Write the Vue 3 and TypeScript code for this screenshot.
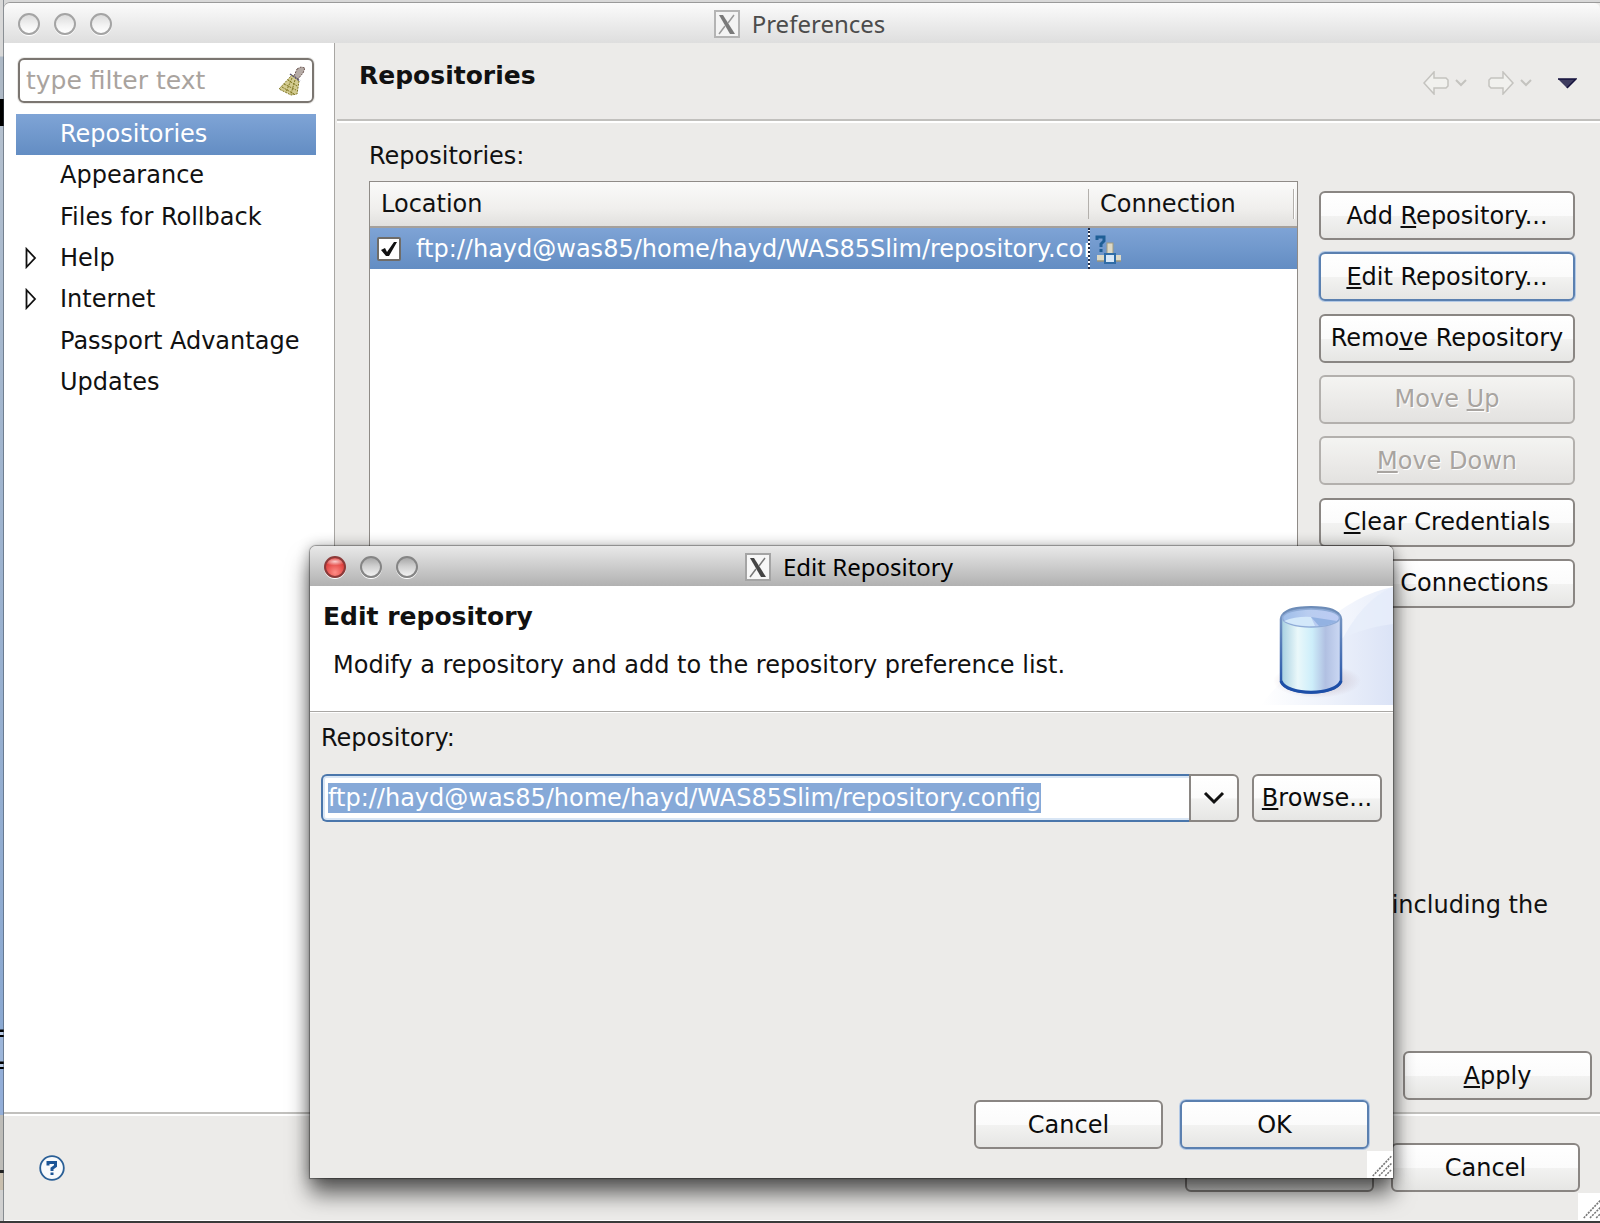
<script setup lang="ts">
import { nextTick, onMounted, ref } from 'vue'

interface TreeItem {
  label: string
  expandable?: boolean
  selected?: boolean
}

interface ActionButton {
  before: string
  key: string
  after: string
  disabled?: boolean
  focused?: boolean
}

const categories: TreeItem[] = [
  { label: 'Repositories', selected: true },
  { label: 'Appearance' },
  { label: 'Files for Rollback' },
  { label: 'Help', expandable: true },
  { label: 'Internet', expandable: true },
  { label: 'Passport Advantage' },
  { label: 'Updates' },
]

const actions: ActionButton[] = [
  { before: 'Add ', key: 'R', after: 'epository...' },
  { before: '', key: 'E', after: 'dit Repository...', focused: true },
  { before: 'Remo', key: 'v', after: 'e Repository' },
  { before: 'Move ', key: 'U', after: 'p', disabled: true },
  { before: '', key: 'M', after: 'ove Down', disabled: true },
  { before: '', key: 'C', after: 'lear Credentials' },
  { before: '', key: 'T', after: 'est Connections' },
]

const filter = ref('')
const enabled = ref(true)
const location = ref('ftp://hayd@was85/home/hayd/WAS85Slim/repository.config')
const locationField = ref<HTMLInputElement | null>(null)

onMounted(async () => {
  await nextTick()
  locationField.value?.focus({ preventScroll: true })
  locationField.value?.select()
})
</script>

<template>
  <div class="desktop">
    <main class="window">
      <header class="titlebar">
        <div class="lights">
          <button class="light" type="button" aria-label="Close"></button>
          <button class="light" type="button" aria-label="Minimize"></button>
          <button class="light" type="button" aria-label="Zoom"></button>
        </div>
        <div class="caption">
          <svg class="x11" viewBox="0 0 26 28" aria-hidden="true">
            <rect x="1" y="1" width="24" height="26" fill="#f4f4f4" stroke="#b4b4b4" stroke-width="2" />
            <path d="M5 5H9L21 24H16Z" fill="#7a7a7a" />
            <path d="M20 5L14 13M11 16L5 24" stroke="#999" stroke-width="1.500" />
          </svg>
          <span>Preferences</span>
        </div>
      </header>

      <div class="body">
        <aside class="sidebar">
          <div class="filter">
            <input v-model="filter" type="text" placeholder="type filter text" aria-label="type filter text" />
            <button class="broom" type="button" aria-label="Clear">
              <svg viewBox="0 0 26 30" aria-hidden="true">
                <path d="M18 3L22 1L26 2L24 7L19 13L15 10Z" fill="#b5aba6" stroke="#6b5550" stroke-dasharray="2 1" />
                <path d="M13 9L20 15L18 28L12 29L0 23Z" fill="#d3cb90" />
                <path d="M13 9L20 15L18 28L12 29L0 23ZM9 14L18 20M5 18L17 24M3 21L15 28M13 12L7 26M16 14L12 28" fill="none" stroke="#7d741f" stroke-dasharray="2 1" />
                <path d="M11 8L21 15" stroke="#5b5677" stroke-width="1.500" stroke-dasharray="2 1" />
              </svg>
            </button>
          </div>
          <ul class="tree" role="tree">
            <li v-for="item in categories" :key="item.label" role="treeitem" :aria-selected="!!item.selected" :class="{ selected: item.selected }">
              <span class="twist">
                <svg v-if="item.expandable" viewBox="0 0 12 22" aria-hidden="true">
                  <path d="M1.500 2V20L10 11Z" fill="#fff" stroke="#111" stroke-width="1.800" />
                </svg>
              </span>
              <span>{{ item.label }}</span>
            </li>
          </ul>
        </aside>

        <section class="page">
          <div class="page-head">
            <h1>Repositories</h1>
            <nav class="history">
              <button type="button" disabled aria-label="Back">
                <svg width="46" height="24" viewBox="0 0 46 24" fill="none" stroke="#c4c3bf" stroke-width="1.500">
                  <path d="M1 12L11 1V7H23L25 9V15L23 17H11V23Z" fill="#f1f1ee" />
                  <path d="M33 9L38 14L43 9" stroke-width="2" />
                </svg>
              </button>
              <button type="button" disabled aria-label="Forward">
                <svg width="46" height="24" viewBox="0 0 46 24" fill="none" stroke="#c4c3bf" stroke-width="1.500">
                  <path d="M25 12L15 1V7H3L1 9V15L3 17H15V23Z" fill="#f1f1ee" />
                  <path d="M33 9L38 14L43 9" stroke-width="2" />
                </svg>
              </button>
              <button type="button" aria-label="Menu">
                <svg width="20" height="24" viewBox="0 0 20 24">
                  <path d="M1 8H19L10 17Z" fill="#3f3d60" />
                  <path d="M1 8H19L10 17" fill="none" stroke="#15123c" stroke-width="1.500" />
                </svg>
              </button>
            </nav>
          </div>

          <div class="page-body">
            <p class="field-label">Repositories:</p>
            <div class="columns">
              <div class="list">
                <table>
                  <colgroup>
                    <col />
                    <col class="col-connection" />
                  </colgroup>
                  <thead>
                    <tr>
                      <th scope="col"><span>Location</span></th>
                      <th scope="col"><span>Connection</span></th>
                    </tr>
                  </thead>
                  <tbody>
                    <tr>
                      <td>
                        <label class="entry">
                          <span class="tick">
                            <input v-model="enabled" type="checkbox" />
                            <svg v-if="enabled" viewBox="0 0 24 24" aria-hidden="true">
                              <path d="M4 13L8 11L10 15L17 5L20 5L12 19H9Z" fill="#111" />
                            </svg>
                          </span>
                          <span>{{ location }}</span>
                        </label>
                      </td>
                      <td class="state">
                        <svg width="28" height="30" viewBox="0 0 28 30" aria-label="Unknown connection">
                          <path d="M3 6V3H10V7L7 10V13M7 15V18" fill="none" stroke="#1f5f96" stroke-width="3" />
                          <rect x="13" y="9" width="6" height="11" fill="#dcd9c6" stroke="#a09c82" />
                          <rect x="3" y="21" width="24" height="6" fill="#dcd9c6" />
                          <path d="M3 27H27" stroke="#97947e" stroke-width="1.500" />
                          <rect x="11" y="20" width="10" height="9" fill="#d7e8f8" stroke="#2f6ca6" stroke-width="2" />
                        </svg>
                      </td>
                    </tr>
                  </tbody>
                </table>
              </div>

              <div class="actions">
                <button v-for="a in actions" :key="a.key + a.after" type="button" class="btn" :class="{ focused: a.focused }" :disabled="a.disabled">
                  {{ a.before }}<u>{{ a.key }}</u>{{ a.after }}
                </button>
              </div>
            </div>
            <p class="note">including the</p>
            <div class="apply-row">
              <button type="button" class="btn wide"><u>A</u>pply</button>
            </div>
          </div>
        </section>
      </div>

      <footer class="footer">
        <button class="help" type="button" aria-label="Help">
          <svg width="26" height="26" viewBox="0 0 26 26" aria-hidden="true">
            <circle cx="13" cy="13" r="11.800" fill="#f8fafc" stroke="#2a5f96" stroke-width="1.800" />
            <path d="M9 10.500V7.500H16.500V11L13 13.500V16M13 17.500V20" fill="none" stroke="#1c5596" stroke-width="3" />
          </svg>
        </button>
        <div class="footer-buttons">
          <button type="button" class="btn wide">OK</button>
          <button type="button" class="btn wide">Cancel</button>
        </div>
        <svg class="grip" viewBox="0 0 24 26" aria-hidden="true">
          <path d="M5 24L23 5M11 24L23 12M17 24L23 18" stroke="#777" stroke-width="1.500" stroke-dasharray="2 1" />
        </svg>
      </footer>
    </main>

    <section class="dialog" role="dialog" aria-labelledby="dialog-title">
      <header class="titlebar active">
        <div class="lights">
          <button class="light red" type="button" aria-label="Close"></button>
          <button class="light" type="button" aria-label="Minimize"></button>
          <button class="light" type="button" aria-label="Zoom"></button>
        </div>
        <div class="caption">
          <svg class="x11" viewBox="0 0 26 28" aria-hidden="true">
            <rect x="1" y="1" width="24" height="26" fill="#f7f7f7" stroke="#a4a4a4" stroke-width="2" />
            <path d="M5 5H9L21 24H16Z" fill="#444" />
            <path d="M20 5L14 13M11 16L5 24" stroke="#777" stroke-width="1.500" />
          </svg>
          <span>Edit Repository</span>
        </div>
      </header>

      <div class="banner">
        <div class="banner-text">
          <h2 id="dialog-title">Edit repository</h2>
          <p>Modify a repository and add to the repository preference list.</p>
        </div>
        <svg class="database" width="132" height="119" viewBox="0 0 132 119" aria-hidden="true">
          <defs>
            <linearGradient id="swoosh" x1="0" x2="1">
              <stop offset="0" stop-color="#fff" />
              <stop offset="0.500" stop-color="#eef2fb" />
              <stop offset="1" stop-color="#dbe3f6" />
            </linearGradient>
            <linearGradient id="swoosh-high" x1="0" x2="1">
              <stop offset="0" stop-color="#f9fafe" />
              <stop offset="1" stop-color="#e8eefa" />
            </linearGradient>
            <linearGradient id="barrel" x1="0" x2="1">
              <stop offset="0" stop-color="#a5cfe0" />
              <stop offset="0.280" stop-color="#eaf8fa" />
              <stop offset="0.520" stop-color="#cdeefa" />
              <stop offset="0.740" stop-color="#b1c0e2" />
              <stop offset="1" stop-color="#ccd9f4" />
            </linearGradient>
            <linearGradient id="rim" x1="0" x2="0" y1="0" y2="1">
              <stop offset="0" stop-color="#7f9cc4" />
              <stop offset="1" stop-color="#1f50a8" />
            </linearGradient>
            <linearGradient id="lid" x1="0" x2="1">
              <stop offset="0" stop-color="#9dbde9" />
              <stop offset="0.450" stop-color="#b9cdf0" />
              <stop offset="1" stop-color="#bccbf4" />
            </linearGradient>
            <radialGradient id="ground">
              <stop offset="0" stop-color="#a88f9c" stop-opacity="0.600" />
              <stop offset="1" stop-color="#a88f9c" stop-opacity="0" />
            </radialGradient>
          </defs>
          <path d="M60 40Q95 8 132 1V119H60Z" fill="url(#swoosh-high)" />
          <path d="M78 60Q100 14 132 1V119H78Z" fill="#e4ebf9" opacity="0.700" />
          <path d="M0 119C40 68 84 44 132 38V119Z" fill="url(#swoosh)" />
          <ellipse cx="56" cy="95" rx="44" ry="17" fill="url(#ground)" />
          <path d="M20 33C20 18 80 18 80 33V96C74 110 26 110 20 96Z" fill="url(#barrel)" stroke="url(#rim)" stroke-width="2.500" />
          <path d="M20 95C26 110 74 110 80 95" fill="none" stroke="#1d4fa8" stroke-width="3" />
          <ellipse cx="50" cy="32" rx="28.500" ry="9" fill="url(#lid)" stroke="#8fabd6" stroke-width="1.500" />
          <path d="M23 35Q36 30 50 31L54 40Q34 41 23 35Z" fill="#d3e8fa" />
          <path d="M50 31L76 35Q68 40 58 40Z" fill="#93b2e2" />
          <path d="M22 28Q28 21 50 21Q72 21 78 28" fill="none" stroke="#6d8cb8" stroke-width="2" />
        </svg>
      </div>

      <div class="form">
        <label class="field-label" for="repository">Repository:</label>
        <div class="row">
          <div class="combo">
            <input id="repository" ref="locationField" v-model="location" type="text" spellcheck="false" />
            <button type="button" aria-label="Show choices">
              <svg width="22" height="16" viewBox="0 0 22 16" aria-hidden="true">
                <path d="M2 3L11 12L20 3" fill="none" stroke="#111" stroke-width="3" />
              </svg>
            </button>
          </div>
          <button type="button" class="btn browse"><u>B</u>rowse...</button>
        </div>
        <div class="dialog-buttons">
          <button type="button" class="btn wide">Cancel</button>
          <button type="button" class="btn wide focused">OK</button>
        </div>
      </div>
      <svg class="grip" viewBox="0 0 24 26" aria-hidden="true">
        <path d="M5 24L23 5M11 24L23 12M17 24L23 18" stroke="#777" stroke-width="1.500" stroke-dasharray="2 1" />
      </svg>
    </section>
  </div>
</template>

<style>
html,
body,
#app {
  height: 100%;
}
</style>

<style scoped>
* {
  box-sizing: border-box;
}
.desktop {
  position: relative;
  min-height: 100vh;
  display: flex;
  padding: 3px 0 2px 4px;
  overflow: hidden;
  font: 24px/28px 'DejaVu Sans', sans-serif;
  color: #111;
  background:
    linear-gradient(#3a3a3a, #3a3a3a) 0 100% / 100% 2px no-repeat,
    linear-gradient(90deg, transparent 3px, rgba(60, 70, 80, 0.5) 3px) 0 0 / 4px 100% no-repeat,
    linear-gradient(#d8d8d8 0 56px, #aeb9c6 57px 99px, #000 99px 126px, #b4c0ce 126px, #a6b8ce 340px, #8ba9d2 1029px, #000 1030px 1032px, #b9cbe6 1032px 1035px, #000 1035px 1037px, #9db6da 1037px 1061px, #000 1062px 1064px, #b9cbe6 1064px 1067px, #000 1067px 1069px, #93aed8 1069px 1115px, #bdbcb8 1115px 1170px, #222 1170px 1173px, #c9bfae 1173px 1190px, #d0d0d0 1190px);
}
h1,
h2,
p,
ul {
  margin: 0;
  padding: 0;
}
button,
input {
  font: inherit;
  color: inherit;
  padding: 0;
  border: 0;
  background: none;
}
button svg {
  display: block;
}
.window {
  flex: 1;
  min-width: 0;
  display: flex;
  flex-direction: column;
  background: #ecebe9;
  border-radius: 6px 0 0 0;
  box-shadow: 0 -1px 0 #9a9a9a;
}
.titlebar {
  position: relative;
  display: flex;
  align-items: center;
  justify-content: center;
  height: 40px;
  flex: none;
  padding-right: 5px;
  border-radius: 6px 6px 0 0;
  background: linear-gradient(#fbfbfb, #dedede);
  color: #4c4c4c;
  font: 24px/28px 'Noto Sans', 'DejaVu Sans', sans-serif;
}
.titlebar.active {
  background: linear-gradient(#e9e9e9, #b1b1b1);
  color: #000;
}
.lights {
  position: absolute;
  left: 14px;
  top: 10px;
  display: flex;
  gap: 14px;
}
.light {
  width: 22px;
  height: 22px;
  border-radius: 50%;
  border: 2px solid #a4a4a4;
  background: linear-gradient(#dcdcdc, #f4f4f4 60%, #fff);
  box-shadow: 0 1px 0 #fff;
}
.active .light {
  border-color: #858585;
  background: linear-gradient(#a8a8a8, #cfcfcf 45%, #f2f2f2);
}
.active .light.red {
  border-color: #8c3a39;
  background:
    radial-gradient(ellipse 60% 22% at 50% 20%, #fbd0ce, transparent),
    radial-gradient(circle at 50% 80%, #ff8d86, #dc3a38 70%);
}
.caption {
  display: flex;
  align-items: center;
  gap: 12px;
  padding-top: 2px;
}
.x11 {
  width: 26px;
  height: 28px;
}
.body {
  flex: 1;
  display: flex;
  min-height: 0;
}
.sidebar {
  width: 331px;
  flex: none;
  padding: 14px 18px 0 12px;
  background: #fff;
  border-right: 1px solid #a8a6a3;
}
.filter {
  display: flex;
  align-items: center;
  height: 45px;
  margin: 1px 2px 11px;
  padding: 0 7px 0 6px;
  border: 2px solid #7b7671;
  border-radius: 6px;
  box-shadow: 0 0 0 1px #ebeae8;
}
.filter input {
  flex: 1;
  min-width: 0;
  font-size: 25px;
  outline: none;
}
.filter input::placeholder {
  color: #a9a39e;
  opacity: 1;
}
.broom svg {
  width: 26px;
  height: 30px;
}
.tree {
  list-style: none;
  display: flex;
  flex-direction: column;
  height: 290px;
}
.tree li {
  flex: 1;
  display: flex;
  align-items: center;
  padding-bottom: 2px;
  white-space: nowrap;
}
.tree li.selected {
  color: #fff;
  background: linear-gradient(#7fa4d6, #638dc3);
}
.twist {
  width: 44px;
  padding-left: 9px;
}
.twist svg {
  display: block;
  width: 12px;
  height: 22px;
}
.page {
  flex: 1;
  min-width: 0;
  margin-left: 2px;
  display: flex;
  flex-direction: column;
}
.page-head {
  display: flex;
  justify-content: space-between;
  height: 78px;
  padding: 19px 23px 0 22px;
  border-bottom: 2px solid #c1c0bd;
  box-shadow: 0 2px 0 #fff;
}
h1,
h2 {
  font-size: 25px;
  line-height: 28px;
  font-weight: bold;
}
.history {
  display: flex;
  gap: 19px;
  padding-top: 9px;
}
.history button {
  height: 24px;
}
.history button:last-child {
  margin-left: 4px;
}
.page-body {
  flex: 1;
  display: flex;
  flex-direction: column;
  padding: 21px 8px 12px 32px;
}
.columns {
  flex: 1;
  display: flex;
  gap: 21px;
  margin-top: 11px;
  padding-right: 17px;
}
.list {
  flex: 1;
  min-width: 0;
  border: 1px solid #8f8b87;
  background: #fff;
}
table {
  width: 100%;
  table-layout: fixed;
  border-collapse: collapse;
}
.col-connection {
  width: 208px;
}
th {
  height: 45px;
  padding: 0;
  text-align: left;
  font-weight: normal;
  background: linear-gradient(#fafaf9, #f0efed 60%, #e1e0de);
  border-bottom: 2px solid #a5a09b;
}
th span {
  display: block;
  padding-left: 11px;
  margin-right: 3px;
  line-height: 30px;
  border-right: 1px solid #b3b0ac;
  box-shadow: 1px 0 0 #fff;
}
th:first-child span {
  margin-right: 0;
}
tbody tr {
  height: 42px;
  color: #fff;
  background: linear-gradient(#7fa4d6, #638dc3);
}
td {
  padding: 0;
  overflow: hidden;
  white-space: nowrap;
}
.entry {
  display: flex;
  align-items: center;
  gap: 15px;
  padding-left: 7px;
}
.tick {
  display: grid;
  flex: none;
}
.tick > * {
  grid-area: 1 / 1;
  width: 24px;
  height: 24px;
}
.tick input {
  appearance: none;
  margin: 0;
  background: #fff;
  border: 2px solid #6f6c68;
  border-radius: 2px;
}
.tick svg {
  pointer-events: none;
}
.state {
  padding-left: 4px;
  border-left: 2px dotted #1d2a44;
}
.state svg {
  display: block;
}
.actions {
  width: 256px;
  flex: none;
  height: 427px;
  padding-top: 10px;
  display: flex;
  flex-direction: column;
  justify-content: space-between;
}
.btn {
  flex: none;
  height: 49px;
  white-space: nowrap;
  text-align: center;
  color: #0c0c0c;
  border: 2px solid #8a8683;
  border-radius: 6px;
  background: linear-gradient(#fff, #fbfbfb 50%, #f2f2f1 52%, #e6e6e4);
}
.btn.focused {
  border-color: #5b80b0;
  box-shadow: 0 0 0 1px #b3c9e6;
}
.btn:disabled {
  color: #a8a4a0;
  border-color: #b3b0ad;
  background: linear-gradient(#f4f4f2, #ecebe9 50%, #e3e2e0);
  text-shadow: 1px 1px 0 #fff;
}
.btn.wide {
  width: 189px;
}
u {
  text-decoration-thickness: 2px;
  text-underline-offset: 2px;
  text-decoration-skip-ink: none;
}
.note {
  padding: 23px 44px 0 0;
  text-align: right;
}
.apply-row {
  display: flex;
  justify-content: flex-end;
  padding-top: 132px;
}
.footer {
  position: relative;
  display: flex;
  align-items: center;
  justify-content: space-between;
  height: 109px;
  flex: none;
  padding: 1px 20px 0 35px;
  border-top: 2px solid #c1c0bd;
  border-bottom: 1px solid #fff;
  box-shadow: inset 0 2px 0 #fff;
}
.footer-buttons {
  display: flex;
  gap: 17px;
}
.grip {
  position: absolute;
  right: 0;
  bottom: 0;
  width: 26px;
  height: 27px;
  background: #fff;
}
.footer .grip {
  right: -4px;
}
.dialog {
  position: absolute;
  left: 310px;
  right: 207px;
  top: 546px;
  min-height: 632px;
  display: flex;
  flex-direction: column;
  background: #ecebe9;
  border-radius: 6px 6px 0 0;
  box-shadow:
    0 0 1px 1px rgba(0, 0, 0, 0.35),
    0 0 14px rgba(0, 0, 0, 0.3),
    0 16px 22px rgba(0, 0, 0, 0.6);
}
.banner {
  display: flex;
  justify-content: space-between;
  height: 126px;
  flex: none;
  background: #fff;
  border-bottom: 1px solid #a9a7a4;
  box-shadow: 0 1px 0 #fff;
}
.banner-text {
  padding: 17px 0 0 13px;
}
.banner-text p {
  padding: 20px 0 0 10px;
}
.form {
  flex: 1;
  display: flex;
  flex-direction: column;
  padding: 12px 11px 29px;
}
.row {
  display: flex;
  gap: 13px;
  margin-top: 22px;
}
.combo {
  flex: 1;
  display: flex;
  height: 48px;
}
.combo input {
  flex: 1;
  min-width: 0;
  padding-left: 5px;
  line-height: 30px;
  outline: none;
  background: #fff;
  border: 2px solid #4a76ab;
  border-right-width: 0;
  border-radius: 6px 0 0 6px;
  box-shadow: inset 0 2px 0 #d9e6f5, inset 2px 0 0 #d9e6f5, inset 0 -2px 0 #d9e6f5;
}
.combo input::selection {
  color: #fff;
  background: #86a9d8;
}
.combo button {
  width: 50px;
  display: grid;
  place-items: center;
  border: 2px solid #8a8683;
  border-radius: 0 6px 6px 0;
  background: linear-gradient(#fff, #fbfbfb 50%, #f2f2f1 52%, #e6e6e4);
}
.btn.browse {
  width: 130px;
  height: 48px;
}
.dialog-buttons {
  display: flex;
  justify-content: flex-end;
  gap: 17px;
  margin-top: auto;
  padding-right: 13px;
}
</style>
